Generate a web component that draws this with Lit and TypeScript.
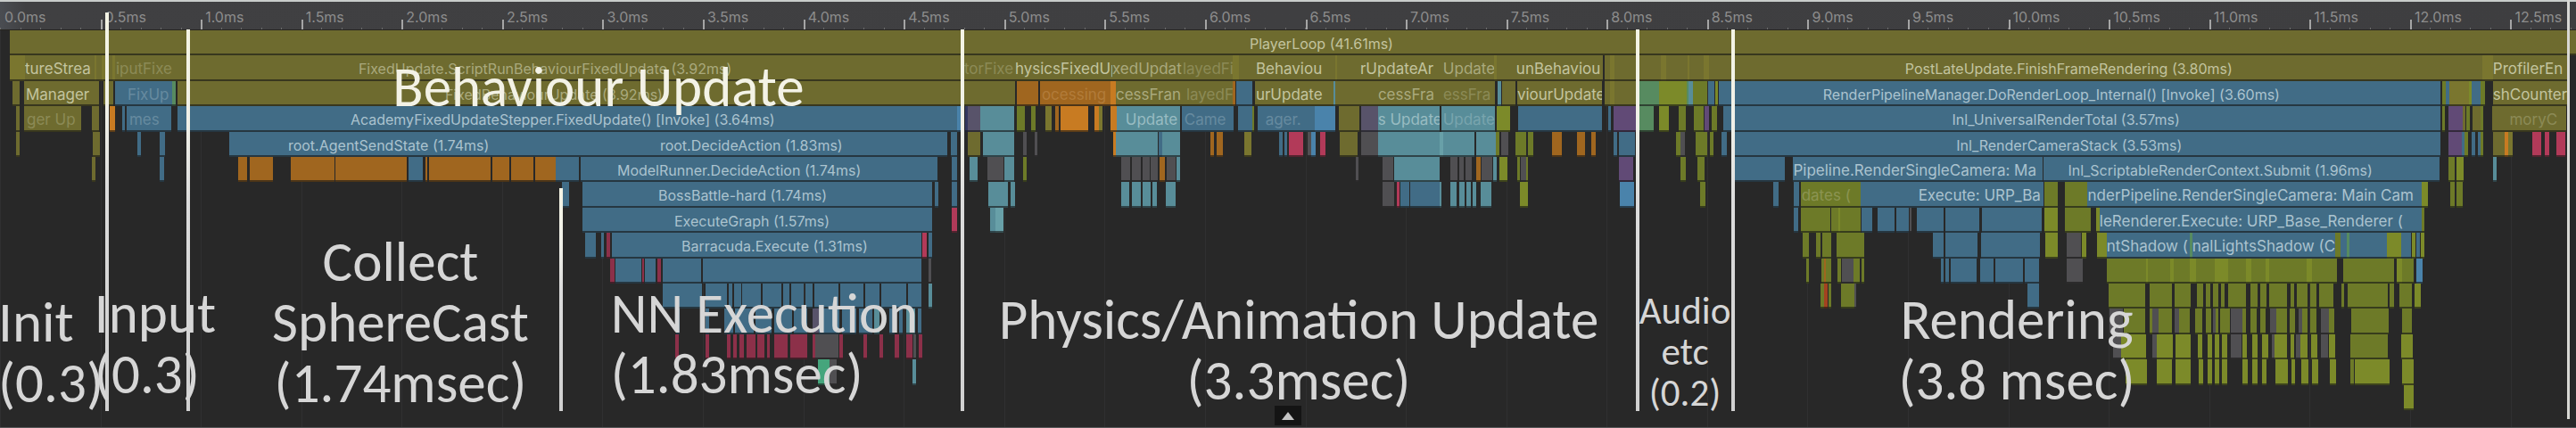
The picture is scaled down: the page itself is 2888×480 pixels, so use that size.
import { LitElement, html, css } from "lit";
import { customElement } from "lit/decorators.js";
import { classMap } from "lit/directives/class-map.js";
import { styleMap } from "lit/directives/style-map.js";

/** Horizontal extent of the visible time window, in chart units. */
const SPAN = 2888;
const pct = (v: number) => `${((v / SPAN) * 100).toFixed(4)}%`;

type Tone = "" | "dim" | "faint";
interface Label { text: string; at: number; tone: Tone }
interface Bar { from: number; to: number; kind: string; label?: Label }

/**
 * One string per call-stack depth. Items are separated by ";" and read
 * "kind from to [| label start | label text | tone]".
 */
const ROWS: string[] = [
  "o 11 2888|1401|PlayerLoop (41.61ms)",
  "O 11 28;o 28 106|27|tureStrea;O 106 108;o 108 114;O 114 118;o 118 126;O 126 129;o 129 193|130|iputFixe|faint;o 193 1079|402|FixedUpdate.ScriptRunBehaviourFixedUpdate (3.92ms)|dim;o 1079 1138|1081|torFixe|faint;o 1138 1247|1138|hysicsFixedUp;o 1247 1325|1247|xedUpdat|dim;o 1325 1382|1326|layedFi|faint;O 1382 1389;o 1389 1497|1408|Behaviou;O 1497 1499;o 1499 1613|1525|rUpdateAr;o 1613 1675|1618|Update|dim;O 1675 1678;o 1678 1797|1700|unBehaviou;o 1799 1805;O 1805 1810;o 1810 1862;O 1862 1868;o 1868 1892;O 1892 1894;o 1894 1910;O 1910 1916;o 1916 2783|2136|PostLateUpdate.FinishFrameRendering (3.80ms);O 2783 2795;o 2795 2878|2795|ProfilerEn",
  "o 14 22;o 27 111|29|Manager;o 116 127;b 129 193|143|FixUp|faint;e 193 197;o 199 1138|499|FixedBehaviourUpdate (3.92ms)|dim;r 1140 1164;r 1166 1245|1168|ocessing|faint;R 1245 1251;o 1251 1330|1251|cessFran|dim;o 1330 1382|1330|layedFi|faint;r 1382 1385;b 1386 1404;o 1407 1495|1408|urUpdate;t 1495 1497;o 1497 1616|1545|cessFra|dim;o 1616 1676|1618|essFra|faint;t 1679 1683;o 1684 1699;o 1701 1796|1701|viourUpdate;o 1799 1805;O 1805 1810;o 1810 1838;e 1838 1860;G 1860 1891;e 1891 1893;t 1893 1898;g 1898 1914;b 1915 1922;G 1923 1926;b 1927 2736|2044|RenderPipelineManager.DoRenderLoop_Internal() [Invoke] (3.60ms);g 2738 2742;b 2742 2746;O 2746 2768;G 2768 2771;b 2771 2781;g 2781 2786;o 2795 2878|2794|shCounter",
  "o 18 22;o 27 91|30|ger Up|faint;o 103 111;R 123 129;b 137 140;b 142 192|145|mes|faint;b 199 1073|393|AcademyFixedUpdateStepper.FixedUpdate() [Invoke] (3.64ms);B 1073 1077;n 1082 1085;v 1085 1099;t 1099 1137;g 1140 1149;g 1156 1161;O 1172 1179;r 1183 1187;R 1189 1220;R 1227 1232;O 1232 1236;R 1245 1252;t 1252 1323|1262|Update|dim;b 1325 1383|1328|Came|faint;b 1388 1404;g 1404 1406;b 1410 1474|1419|ager.|faint;B 1474 1497;o 1501 1524;v 1526 1545;t 1545 1614|1545|s Update|dim;t 1616 1676|1618|Update|faint;G 1678 1693;b 1702 1796;b 1803 1806;p 1809 1836;e 1838 1854;G 1860 1871;g 1882 1890;g 1899 1910;p 1911 1916;g 1919 1925;b 1932 2736|2189|Inl_UniversalRenderTotal (3.57ms);g 2738 2742;p 2746 2762;o 2762 2765;g 2766 2770;o 2773 2782;g 2782 2785;o 2795 2878|2814|moryC|faint",
  "o 18 22;o 104 112;b 154 158;b 179 185;b 257 683|323|root.AgentSendState (1.74ms);b 683 1062|740|root.DecideAction (1.83ms);b 1066 1073;o 1085 1099;t 1102 1137;x 1147 1151;x 1160 1163;R 1248 1251;t 1251 1298;b 1299 1303;t 1303 1323;r 1357 1361;r 1364 1371;O 1395 1403;b 1434 1438;b 1440 1443;k 1445 1461;x 1466 1470;B 1470 1475;k 1480 1486;o 1502 1522;x 1526 1545;t 1545 1614;T 1614 1618;t 1618 1653;t 1655 1677;g 1677 1681;x 1683 1691;g 1700 1712;g 1714 1720;r 1741 1752;r 1769 1778;r 1785 1790;b 1810 1814;b 1816 1834;g 1880 1885;x 1885 1890;g 1902 1915;g 1918 1922;b 1931 1937;b 1944 2737|2194|Inl_RenderCameraStack (3.53ms);p 2746 2761;b 2761 2764;g 2764 2768;b 2772 2776;b 2779 2782;g 2782 2785;o 2796 2809;R 2809 2813;O 2813 2818;k 2840 2850;k 2854 2859;k 2867 2877",
  "o 103 107;b 179 184;r 267 277;r 280 306;r 326 375;r 376 456;b 458 474;r 477 479;r 481 550;r 552 571;r 573 598;r 600 623;b 623 649;b 651 1051|692|ModelRunner.DecideAction (1.74ms);b 1067 1073;t 1087 1096;x 1107 1125;t 1126 1137;g 1147 1151;x 1257 1267;x 1269 1279;x 1281 1289;x 1290 1298;r 1300 1306;x 1308 1318;t 1319 1323;x 1520 1523;x 1550 1562;t 1563 1614;x 1626 1634;x 1636 1641;x 1643 1650;r 1655 1660;x 1661 1673;t 1674 1678;G 1681 1690;g 1701 1704;x 1705 1711;g 1711 1713;p 1815 1831;g 1885 1891;g 1904 1912;b 1946 2002;b 2011 2291|2011|Pipeline.RenderSingleCamera: Ma;b 2292 2736|2319|Inl_ScriptableRenderContext.Submit (1.96ms);g 2746 2753;G 2755 2763;t 2796 2800",
  "b 630 638;b 653 1045|738|BossBattle-hard (1.74ms);b 1048 1052;b 1067 1073;t 1108 1130;t 1133 1138;t 1257 1266;t 1269 1279;t 1281 1290;t 1292 1297;t 1307 1318;x 1550 1563;k 1566 1569;b 1570 1580;b 1581 1614;t 1614 1616;t 1626 1633;t 1636 1642;t 1644 1649;t 1651 1655;t 1660 1672;G 1704 1713;B 1816 1832;g 1906 1912;b 1988 1994;b 2011 2017;g 2019 2086|2020|dates (|faint;b 2086 2291|2151|Execute: URP_Ba;g 2292 2307;g 2315 2340;b 2340 2715|2341|nderPipeline.RenderSingleCamera: Main Cam;G 2715 2722;g 2747 2752;g 2754 2761",
  "b 653 1045|756|ExecuteGraph (1.57ms);k 1067 1073;t 1110 1116;T 1116 1125;b 2011 2016;g 2019 2052;g 2053 2061;G 2061 2063;g 2063 2086;b 2087 2099;b 2105 2124;b 2126 2140;x 2141 2143;b 2149 2179;b 2181 2219;b 2222 2289;G 2292 2307;g 2315 2344;G 2350 2354;b 2354 2715|2354|leRenderer.Execute: URP_Base_Renderer (;g 2715 2718",
  "b 656 668;b 674 677;m 680 684;b 686 1033|764|Barracuda.Execute (1.31ms);k 1034 1039;b 1041 1045;g 2021 2028;g 2036 2041;g 2043 2053;g 2059 2090;b 2167 2179;b 2181 2217;b 2221 2287;G 2293 2307;x 2317 2333;G 2334 2339;G 2351 2362;b 2362 2455|2362|ntShadow (;e 2455 2458;b 2458 2618|2458|nalLightsShadow (C;g 2618 2624;b 2624 2631;e 2631 2634;b 2634 2676;G 2676 2692;b 2692 2703;G 2704 2708;b 2709 2713;G 2714 2718",
  "m 684 689;b 690 719;m 720 722;b 723 735;m 737 741;b 743 786;b 788 1033;x 1041 1044;g 2025 2028;g 2042 2045;r 2045 2047;g 2047 2053;g 2060 2064;x 2065 2078;g 2078 2085;g 2087 2090;b 2176 2179;b 2181 2185;b 2187 2216;b 2220 2235;b 2237 2268;b 2270 2286;x 2317 2335;g 2362 2406;G 2406 2408;g 2408 2433;G 2433 2437;g 2437 2455;G 2455 2462;g 2462 2483;G 2483 2498;g 2498 2518;G 2518 2524;g 2524 2540;G 2540 2544;g 2544 2586;G 2586 2592;g 2592 2620;g 2627 2684;G 2687 2693;g 2693 2706;B 2709 2716",
  "b 743 787;b 791 815;b 817 821;b 823 831;b 832 853;b 855 876;b 878 885;b 887 901;b 903 911;b 913 940;b 942 968;b 970 986;b 988 1016;b 1018 1033;t 1041 1045;g 2041 2045;s 2045 2049;g 2050 2053;g 2064 2079;x 2079 2081;b 2273 2286;g 2364 2405;g 2410 2435;g 2438 2456;g 2463 2470;g 2473 2478;g 2481 2487;g 2490 2494;g 2498 2518;g 2523 2531;g 2534 2541;g 2544 2564;g 2568 2572;g 2575 2587;g 2590 2598;g 2601 2617;g 2626 2629;g 2633 2678;g 2680 2685;g 2691 2705;G 2708 2715",
  "b 758 762;b 791 795;b 812 822;b 824 845;b 847 865;b 868 888;b 890 905;v 911 918;b 918 941;b 944 960;b 963 978;t 980 986;b 997 1003;b 1008 1012;t 1016 1026;b 1029 1033;x 2365 2380;g 2381 2405;g 2410 2413;x 2413 2420;g 2420 2435;x 2438 2443;g 2443 2455;g 2461 2469;g 2473 2479;x 2481 2484;g 2484 2487;g 2489 2500;x 2501 2514;g 2514 2518;g 2523 2530;g 2534 2540;x 2545 2552;g 2552 2564;g 2567 2573;x 2577 2581;g 2581 2587;g 2590 2597;x 2602 2611;g 2611 2617;g 2636 2678;g 2693 2704",
  "m 757 761;m 791 795;m 815 819;m 822 826;m 829 834;m 837 847;m 849 857;m 860 863;m 868 883;m 886 905;m 911 914;x 914 940;m 941 945;m 968 972;m 986 990;m 1003 1008;m 1016 1023;x 1024 1027;m 1030 1034;x 2369 2378;G 2378 2406;x 2413 2418;G 2418 2436;G 2439 2456;G 2464 2469;G 2475 2480;G 2483 2488;G 2491 2497;x 2501 2513;G 2514 2519;G 2525 2531;G 2536 2543;x 2547 2550;G 2551 2565;G 2569 2573;x 2575 2580;G 2580 2588;G 2592 2599;x 2603 2611;G 2612 2619;g 2636 2678;G 2693 2706",
  "c 917 930;x 930 938;t 1023 1027;G 2383 2407;G 2418 2435;G 2439 2456;G 2465 2470;G 2475 2480;G 2483 2488;G 2491 2497;G 2514 2520;G 2525 2531;G 2536 2541;G 2551 2565;G 2569 2573;G 2580 2588;G 2592 2599;G 2612 2619;g 2635 2639;G 2640 2679;G 2693 2706",
  "G 2695 2706",
];

const parseRow = (row: string): Bar[] =>
  row.split(";").map((item) => {
    const [head, at, text, tone] = item.split("|");
    const [kind, from, to] = head.split(" ");
    return {
      kind,
      from: +from,
      to: +to,
      label: text ? { text, at: +at, tone: (tone ?? "") as Tone } : undefined,
    };
  });

const DEPTHS = ROWS.map(parseRow);

const TICKS = Array.from({ length: 26 }, (_, i) => `${(i / 2).toFixed(1)}ms`);

interface Mark { x: number; cls: string }
const MARKS: Mark[] = [
  { x: 120, cls: "tall" },
  { x: 211, cls: "" },
  { x: 629, cls: "short" },
  { x: 1079, cls: "" },
  { x: 1836, cls: "" },
  { x: 1943, cls: "" },
  { x: 2880, cls: "full" },
];

interface Note { x: number; lines: string[]; cls: string }
const NOTES: Note[] = [
  { x: 671, lines: ["Behaviour Update"], cls: "title" },
  { x: 57, lines: ["Init", "(0.3)"], cls: "low left" },
  { x: 174, lines: ["Input", "(0.3)"], cls: "high left" },
  { x: 449, lines: ["Collect", "SphereCast", "(1.74msec)"], cls: "low" },
  { x: 857, lines: ["NN Execution", "(1.83msec)"], cls: "high left" },
  { x: 1456, lines: ["Physics/Animation Update", "(3.3msec)"], cls: "mid" },
  { x: 1889, lines: ["Audio", "etc", "(0.2)"], cls: "small" },
  { x: 2261, lines: ["Rendering", "(3.8 msec)"], cls: "mid" },
];

@customElement("time-ruler")
class TimeRuler extends LitElement {
  static styles = css`
    :host {
      display: block;
      border-top: 2px solid #c9cdcb;
      background: linear-gradient(90deg, #4a4d52, #404042 1%, #3e3e40);
    }
    .ticks {
      display: flex;
      height: 31px;
      overflow: hidden;
      border-bottom: 1px solid #26241f;
      background: repeating-linear-gradient(90deg, #6c6c6c 0 1px, transparent 1px 0.7796%)
        bottom / 100% 2px no-repeat;
    }
    .tick {
      flex: none;
      width: 3.8982%;
      box-sizing: border-box;
      padding-left: 5px;
      font: 16px/35px Inter, Roboto, sans-serif;
      color: #8d8d8d;
      background: linear-gradient(#a5a5a5, #a5a5a5) left bottom / 2px 11px no-repeat;
    }
    .tick:first-child {
      background: none;
    }
  `;
  render() {
    return html`<div class="ticks">${TICKS.map((t) => html`<span class="tick">${t}</span>`)}</div>`;
  }
}

@customElement("flame-row")
class FlameRow extends LitElement {
  static properties = { bars: { attribute: false } };
  declare bars: Bar[];
  static styles = css`
    :host {
      display: flex;
      min-height: 0;
      min-width: 0;
      overflow: hidden;
    }
    .bar {
      flex: none;
      box-sizing: border-box;
      overflow: hidden;
      white-space: nowrap;
      font: 16px/30px Inter, Roboto, sans-serif;
      color: #c3c49f;
      border-bottom: 2px solid rgba(20, 20, 20, 0.6);
    }
    .clipped { font-size: 17px; }
    .o { background: #6e6b2f; }
    .O { background: #7a762f; }
    .g { background: #6d7a28; }
    .G { background: #7c8a29; }
    .b { background: #416c86; color: #abc3cf; }
    .B { background: #4a83ab; }
    .t { background: #588d99; color: #b4d0d4; }
    .T { background: #68a0a8; }
    .e { background: #578b60; }
    .c { background: #45a57c; }
    .r { background: #a0661f; color: #d3a36a; }
    .R { background: #c87b22; }
    .s { background: #a3431f; }
    .k { background: #b23a59; }
    .m { background: #8c3049; }
    .p { background: #614a76; }
    .v { background: #58536a; }
    .n { background: #33375f; }
    .x { background: #504f52; }
    .dim span { opacity: 0.7; }
    .faint span { opacity: 0.35; }
  `;
  render() {
    let end = 0;
    return this.bars.map((bar) => {
      const gap = bar.from - end;
      end = bar.to;
      const cls = classMap({
        bar: true,
        [bar.kind]: true,
        clipped: !!bar.label && !bar.label.text.endsWith("ms)"),
        dim: bar.label?.tone === "dim",
        faint: bar.label?.tone === "faint",
      });
      const style: Record<string, string> = { marginLeft: pct(gap), width: pct(bar.to - bar.from) };
      if (bar.label) style.paddingLeft = pct(Math.max(0, bar.label.at - bar.from));
      return html`<div class=${cls} style=${styleMap(style)}>
        ${bar.label ? html`<span>${bar.label.text}</span>` : ""}
      </div>`;
    });
  }
}

@customElement("app-root")
class AppRoot extends LitElement {
  static styles = css`
    :host {
      display: block;
    }
    .profiler {
      position: relative;
      display: flex;
      flex-direction: column;
      box-sizing: border-box;
      height: 100vh;
      min-height: 320px;
      overflow: hidden;
      background: #282828;
      border-bottom: 1px solid #57585a;
    }
    .chart {
      flex: 1;
      min-height: 0;
      display: grid;
      grid-template-rows: repeat(15, minmax(0, 1fr));
      padding-bottom: 19px;
      background: repeating-linear-gradient(90deg, #303031 0 1px, transparent 1px 3.8982%);
    }
    .mark {
      position: absolute;
      top: 33px;
      bottom: 18px;
      width: 4px;
      margin-left: -2px;
      background: linear-gradient(#f4f4e4, #f0f0e8 25%, #dcdcdc 45%, #d0d0d0);
    }
    .tall { top: 14px; }
    .short { top: 211px; }
    .full { top: 0; bottom: 9px; width: 3px; background: #d8d8d4; }
    .note {
      position: absolute;
      margin: 0;
      transform: translateX(-50%);
      text-align: center;
      white-space: nowrap;
      font: 63px/68px Carlito, Lato, sans-serif;
      color: #d6d6d6;
    }
    .line { display: block; }
    .low { bottom: 15px; }
    .mid { bottom: 18px; }
    .high { bottom: 25px; }
    .left { text-align: left; }
    .title { top: 64px; color: #f3f2e6; }
    .small { bottom: 15px; font-size: 43px; line-height: 46px; }
    .expand {
      position: absolute;
      left: 50%;
      bottom: 2px;
      width: 30px;
      height: 22px;
      margin-left: -15px;
      padding: 0;
      border: 0;
      background: #141414;
      display: grid;
      place-items: center;
    }
  `;
  render() {
    return html`
      <main class="profiler">
        <time-ruler></time-ruler>
        <div class="chart">${DEPTHS.map((bars) => html`<flame-row .bars=${bars}></flame-row>`)}</div>
        ${MARKS.map((m) => html`<div class="mark ${m.cls}" style="left:${pct(m.x)}"></div>`)}
        ${NOTES.map(
          (n) => html`<p class="note ${n.cls}" style="left:${pct(n.x)}">
            ${n.lines.map((l) => html`<span class="line">${l}</span>`)}
          </p>`
        )}
        <button class="expand" type="button" aria-label="Expand">
          <svg width="14" height="9" viewBox="0 0 14 9"><path d="M7 0l7 9H0z" fill="#c4c4c4" /></svg>
        </button>
      </main>
    `;
  }
}
